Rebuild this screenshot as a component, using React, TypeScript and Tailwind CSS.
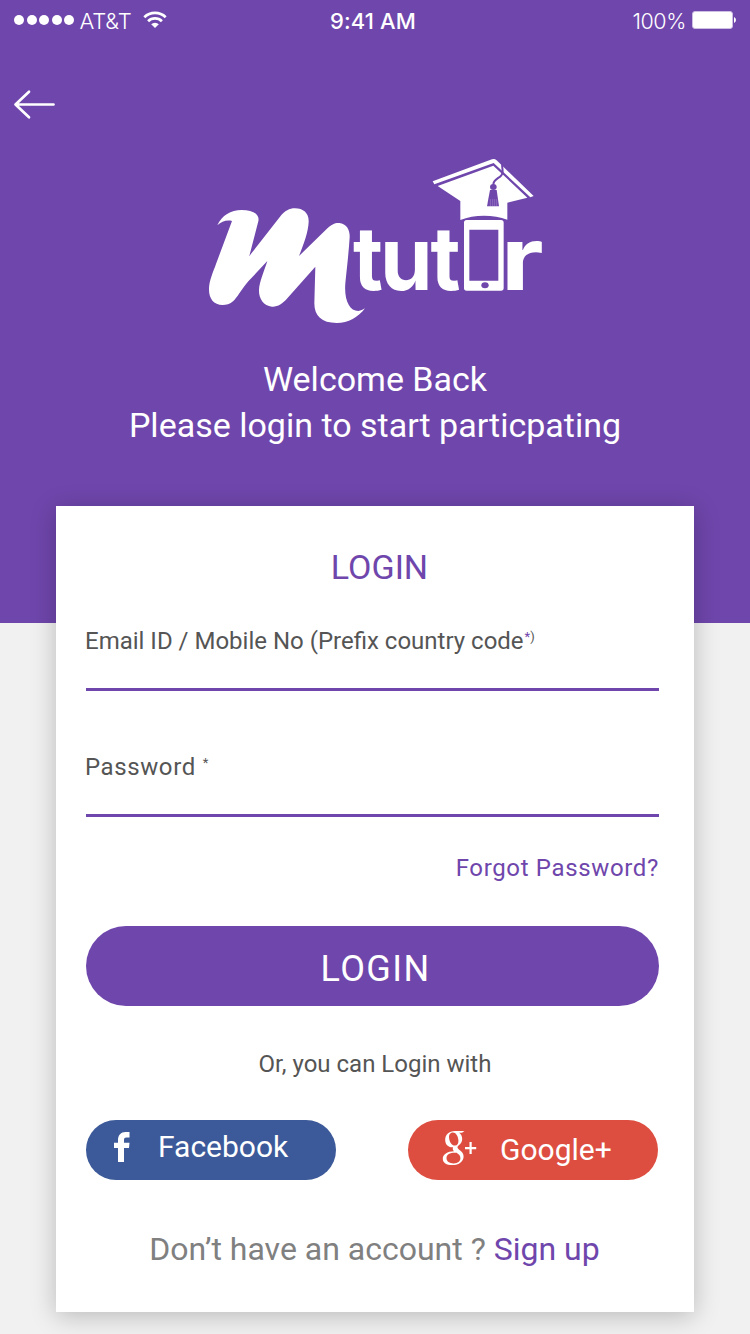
import type { ReactNode } from "react";

function StatusBar() {
  return (
    <div className="grid h-10 grid-cols-3 items-center font-['Inter',sans-serif] text-[22px] leading-[38px] text-white">
      <div className="flex items-center pl-[14px]">
        <div className="flex gap-[2.6px]">
          {[0, 1, 2, 3, 4].map((dot) => (
            <span key={dot} className="size-[10px] rounded-full bg-white" />
          ))}
        </div>
        <span className="ml-[5px] pt-[2px] text-[22px] font-[350] tracking-[-0.1px]">AT&amp;T</span>
        <svg className="-mt-px ml-[11px]" width="24" height="18" viewBox="0 0 24 18" fill="none" stroke="#fff" strokeWidth="2.7">
          <path d="M1.3 6.2A15.5 15.5 0 0 1 22.7 6.2" />
          <path d="M5.1 10.2A9.7 9.7 0 0 1 18.9 10.2" />
          <path d="M12 17L8.2 13.2A5.4 5.4 0 0 1 15.8 13.2Z" fill="#fff" stroke="none" />
        </svg>
      </div>
      <span className="pt-[2px] pr-[4px] text-center text-[22px] font-medium tracking-[0.1px]">9:41 AM</span>
      <div className="flex items-center justify-end pr-[14px]">
        <span className="pt-[2px] text-[21.5px] font-[350] tracking-[-0.4px]">100%</span>
        <svg className="ml-[6px]" width="44" height="18" viewBox="0 0 44 18">
          <rect x="0.5" y="0.5" width="40" height="17" rx="2.5" fill="#fff" stroke="#cdbfe4" />
          <path d="M42 6Q44 7 44 9T42 12Z" fill="#fff" />
        </svg>
      </div>
    </div>
  );
}

function Logo() {
  return (
    <svg width="350" height="180" viewBox="0 0 350 180" fill="#fff" role="img" aria-label="Mtutor">
      <g transform="scale(.33333)">
        <path d="M52 226C66 196 92 180 125 180C158 180 180 192 175 214L148 318L240 200C255 182 268 175 285 175C310 175 327 190 326 215C325 245 312 280 297 318L380 237C395 223 405 218 418 219C440 221 450 240 449 262C446 310 440 360 436 400C432 450 448 483 475 483Q486 482 495 475C475 502 445 519 410 519C365 519 343 498 343 460L346 350L262 445C247 462 233 471 216 470C190 468 176 445 177 420C178 395 192 365 202 333L145 394C125 418 110 445 100 453C90 463 78 465 68 465C40 465 26 445 27 415C28 390 40 365 48 342L96 213C80 209 65 214 52 226Z" />
      </g>
      <g fontFamily="Inter, sans-serif" fontWeight="700" fontSize="88">
        <text transform="translate(153 140.3) scale(.93 1)">t</text>
        <text transform="translate(180 140.3) scale(.96 1)">u</text>
        <text transform="translate(230.5 140.3) scale(.93 1)">t</text>
        <text transform="translate(301 140.3) scale(1.19 1)">r</text>
      </g>
      <g transform="translate(150 0) scale(.33333)">
        <path d="M248 94L426 28Q433 25 439 30L551 138L541 142L431 39L253 103Z" />
        <path d="M263 108L430 47L532 143L472 158V209C430 193 372 193 331 210V153Z" />
        <path d="M457 42C454 52 463 66 454 76C446 86 430 88 430 104" fill="none" stroke="#6f46ac" strokeWidth="6" />
        <ellipse cx="430" cy="111" rx="10" ry="9" fill="#6f46ac" />
        <path d="M420 120H440L447 169H411Z" fill="#6f46ac" />
        <path d="M421 147V169M428 147V169M434 147V169M440 147V169" stroke="#fff" strokeWidth="1.2" opacity=".5" />
        <path fillRule="evenodd" d="M350 210H453Q461 210 461 218V414Q461 422 453 422H350Q342 422 342 414V218Q342 210 350 210ZM358 239V392H445V239Z" />
        <ellipse cx="405" cy="406" rx="11" ry="9" fill="#6f46ac" />
      </g>
    </svg>
  );
}

function Field({ children }: { children: ReactNode }) {
  return (
    <div className="h-[126px]">
      <div className="flex h-[66px] w-[573px] items-start border-b-[3px] border-[#6f46ac] text-2xl leading-8 text-[#555]">
        {children}
      </div>
    </div>
  );
}

export default function App() {
  return (
    <div className="h-[1334px] w-[750px] overflow-hidden bg-[#f1f1f1] font-['Roboto',sans-serif]">
      <header className="h-[623px] bg-[#6f46ac] text-white">
        <StatusBar />
        <button className="mt-[49px] ml-[13px] block" aria-label="Back">
          <svg width="43" height="31" viewBox="0 0 43 31" fill="none" stroke="#fff" strokeWidth="2.7" strokeLinecap="round" strokeLinejoin="round">
            <path d="M40.5 15.5H2.5M16 2.8L2.5 15.5L16 28.2" />
          </svg>
        </button>
        <div className="mt-[30px] ml-[200px]">
          <Logo />
        </div>
        <div className="mt-[26px] text-center text-[34px] leading-[46px]">
          <p>Welcome Back</p>
          <p>Please login to start particpating</p>
        </div>
      </header>

      <main className="relative mx-[56px] -mt-[117px] h-[806px] bg-white px-[30px] pt-[40px] shadow-[0_4px_24px_rgba(0,0,0,0.23)]">
        <h1 className="h-[79px] pl-[9px] text-center text-[34px] leading-[42px] text-[#6f46ac]">LOGIN</h1>
        <Field>
          <span className="-ml-px">Email ID / Mobile No (Prefix country code</span>
          <span className="ml-px text-[13px] leading-[23px] text-[#6f46ac]">*</span>
          <span className="text-[13px] leading-[23px]">)</span>
        </Field>
        <Field>
          <span className="-ml-px tracking-[0.6px]">Password</span>
          <span className="ml-[7px] text-[13px] leading-[23px]">*</span>
        </Field>
        <a className="-mt-[25px] block pr-[5px] text-right text-2xl leading-8 tracking-[0.65px] text-[#6f46ac]">Forgot Password?</a>
        <button className="mt-[42px] block h-20 w-[573px] rounded-full bg-[#6f46ac] pt-[5px] pl-[6px] text-[36px] tracking-[1.4px] text-white">
          LOGIN
        </button>
        <p className="mt-[42px] text-center text-2xl leading-8 text-[#555]">Or, you can Login with</p>
        <div className="mt-[40px] flex gap-[72px] text-[30px] text-white">
          <button className="flex h-[60px] w-[250px] items-start rounded-full bg-[#3c5a99] pl-[28px]">
            <svg className="mt-[12px]" width="16" height="30" viewBox="0 0 16 30" fill="#fff">
              <path d="M4 30V16H0V10.7H4V8C4 3 7 0 11.5 0H15.5V5.5H12.5C10.7 5.5 10 6.3 10 8V10.7H15.5L15 16H10V30Z" />
            </svg>
            <span className="ml-[28px] leading-[54px]">Facebook</span>
          </button>
          <button className="flex h-[60px] w-[250px] items-start rounded-full bg-[#dd4e41] pl-[34px]">
            <svg className="mt-[10px]" width="35" height="36" viewBox="0 0 35 36" fill="#fff">
              <path fillRule="evenodd" d="M13 1H22.5L20 2.8H17C19 4 20.2 6.2 20.2 9C20.2 12 18.7 13.8 16.5 15.6C14.8 17 15.2 18.2 17.2 19.7C20 21.8 21.6 23.4 21.6 26.4C21.6 31.2 17.3 35 10.2 35C4.5 35 .8 32.8.8 28.7C.8 24.3 5.3 21.5 12 21.3C10.6 19.9 10.5 18.7 11.1 17.3C6.3 17.7 3.2 14.4 3.2 10C3.2 4.7 7 1 13 1ZM11 2.4C8 2.4 6.8 4.8 7.1 7.9C7.5 12.1 9.8 15.6 13 15.5C15.5 15.4 16.7 13.2 16.4 9.9C16 5.7 13.7 2.4 11 2.4ZM13 22.8C7.8 22.8 4.5 24.4 4.5 28.1C4.5 31.4 7.4 33.4 11.7 33.4C15.8 33.4 18.4 31.3 18.4 28C18.4 25.7 17 24.4 14.6 22.8Z" />
              <path d="M27.5 12H29.7V17H34.2V19.2H29.7V24H27.5V19.2H23V17H27.5Z" />
            </svg>
            <span className="ml-[23px] leading-[60px]">Google+</span>
          </button>
        </div>
        <p className="mt-[48px] pr-[1px] text-center text-[32px] leading-[42px] text-[#808080]">
          Don’t have an account ? <a className="text-[#6f46ac]">Sign up</a>
        </p>
      </main>
    </div>
  );
}
